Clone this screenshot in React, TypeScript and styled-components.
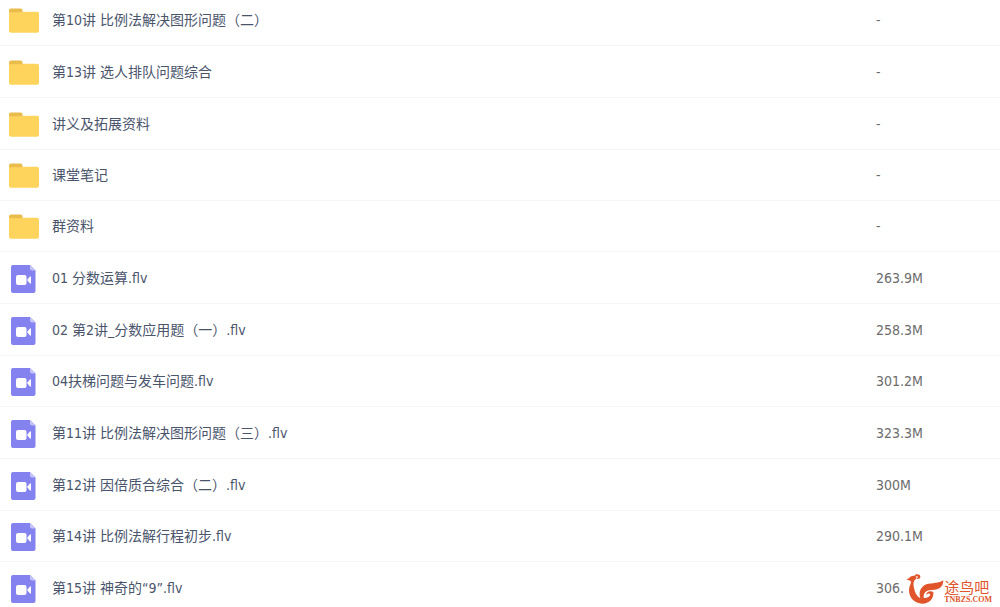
import React from 'react';
import styled, { createGlobalStyle } from 'styled-components';

const GlobalStyle = createGlobalStyle`
  * { box-sizing: border-box; }
  body {
    margin: 0;
    background: #fff;
    overflow: hidden;
    font-family: "DejaVu Sans Condensed", "Noto Sans CJK SC", sans-serif;
    font-size: 14px;
    line-height: 20px;
  }
`;

const Page = styled.main`
  position: relative;
  overflow: hidden;
`;

const FileTable = styled.table`
  width: 100%;
  margin-top: -6px;
  border-collapse: separate;
  border-spacing: 0;
  table-layout: fixed;
`;

const Row = styled.tr`
  height: 52px;
  &:nth-child(4), &:nth-child(3n + 5) { height: 51px; }
`;

const Cell = styled.td`
  padding: 0;
  border-bottom: 1px solid #f3f5f9;
  vertical-align: middle;
`;

const NameCell = styled(Cell)`
  padding-left: 8px;
`;

const SizeCell = styled(Cell)`
  width: 124px;
  color: #6c6c6c;
`;

const FileLink = styled.a`
  display: flex;
  align-items: center;
  gap: 12px;
  color: #4a556c;
  text-decoration: none;
  white-space: nowrap;
`;

const Icon = styled.svg`
  flex: none;
  width: 32px;
  height: 32px;
`;

const Watermark = styled.div`
  position: absolute;
  right: 8px;
  bottom: 10px;
  display: flex;
  align-items: flex-end;
  color: #e0552b;
`;

const Bird = styled.svg`
  width: 38px;
  height: 30px;
`;

const Brand = styled.div`
  display: flex;
  flex-direction: column;
`;

const BrandName = styled.span`
  font-family: "Noto Sans CJK SC", sans-serif;
  font-size: 15px;
  line-height: 18px;
`;

const BrandUrl = styled.span`
  font-family: "Liberation Serif", serif;
  font-size: 8px;
  font-weight: 700;
  line-height: 8px;
`;

type Kind = 'folder' | 'video';
type Entry = { kind: Kind; name: string; size: string };

const entries: Entry[] = [
  { kind: 'folder', name: '第10讲 比例法解决图形问题（二）', size: '-' },
  { kind: 'folder', name: '第13讲 选人排队问题综合', size: '-' },
  { kind: 'folder', name: '讲义及拓展资料', size: '-' },
  { kind: 'folder', name: '课堂笔记', size: '-' },
  { kind: 'folder', name: '群资料', size: '-' },
  { kind: 'video', name: '01 分数运算.flv', size: '263.9M' },
  { kind: 'video', name: '02 第2讲_分数应用题（一）.flv', size: '258.3M' },
  { kind: 'video', name: '04扶梯问题与发车问题.flv', size: '301.2M' },
  { kind: 'video', name: '第11讲 比例法解决图形问题（三）.flv', size: '323.3M' },
  { kind: 'video', name: '第12讲 因倍质合综合（二）.flv', size: '300M' },
  { kind: 'video', name: '第14讲 比例法解行程初步.flv', size: '290.1M' },
  { kind: 'video', name: '第15讲 神奇的“9”.flv', size: '306.' },
];

const FolderIcon = () => (
  <Icon viewBox="0 0 32 32" aria-hidden="true">
    <path d="M1 6.500a2 2 0 0 1 2-2h9.500a2 2 0 0 1 2 2V12H1z" fill="#eabc4c" />
    <path d="M1 8.200h12.500l1.500-.4h14a2 2 0 0 1 2 2v17a2 2 0 0 1-2 2H3a2 2 0 0 1-2-2z" fill="#ffd45c" />
  </Icon>
);

const VideoIcon = () => (
  <Icon viewBox="0 0 32 32" aria-hidden="true">
    <path d="M5 3h17l5.500 5.500V29a2 2 0 0 1-2 2H5a2 2 0 0 1-2-2V5a2 2 0 0 1 2-2z" fill="#8482ee" />
    <path d="M22 3l5.500 5.500H24a2 2 0 0 1-2-2z" fill="#c5c4fa" />
    <rect x="8" y="13" width="10.500" height="10" rx="2" fill="#fff" />
    <path d="M19 18L22 14.400q1-.6 1 .6v6q0 1.200-1 .6z" fill="#fff" />
  </Icon>
);

export default function App() {
  return (
    <Page>
      <GlobalStyle />
      <FileTable>
        <tbody>
          {entries.map(({ kind, name, size }) => (
            <Row key={name}>
              <NameCell>
                <FileLink href="#">
                  {kind === 'folder' ? <FolderIcon /> : <VideoIcon />}
                  {name}
                </FileLink>
              </NameCell>
              <SizeCell>{size}</SizeCell>
            </Row>
          ))}
        </tbody>
      </FileTable>
      <Watermark>
        <Bird viewBox="141 37 114 90" aria-hidden="true" fill="currentColor">
          <path d="M141 54C151 52 153 41 165 42C172 42 175 48 171 51C163 57 162 66 165 78C167 92 173 104 184 110C178 92 184 76 202 68C220 63 240 66 253 56C253 76 240 86 216 85C202 85 193 94 194 108C203 111 213 106 214 98C210 94 205 95 201 100C202 89 214 86 223 91C225 112 210 126 190 126C167 126 150 108 150 86C150 72 158 66 155 58C151 54 147 56 141 54Z" />
          <path d="M167 42C170 36 182 37 184 44C185 50 178 54 172 51C177 50 178 45 174 44C171 43 169 43 167 42Z" />
        </Bird>
        <Brand>
          <BrandName>途鸟吧</BrandName>
          <BrandUrl>TNBZS.COM</BrandUrl>
        </Brand>
      </Watermark>
    </Page>
  );
}
